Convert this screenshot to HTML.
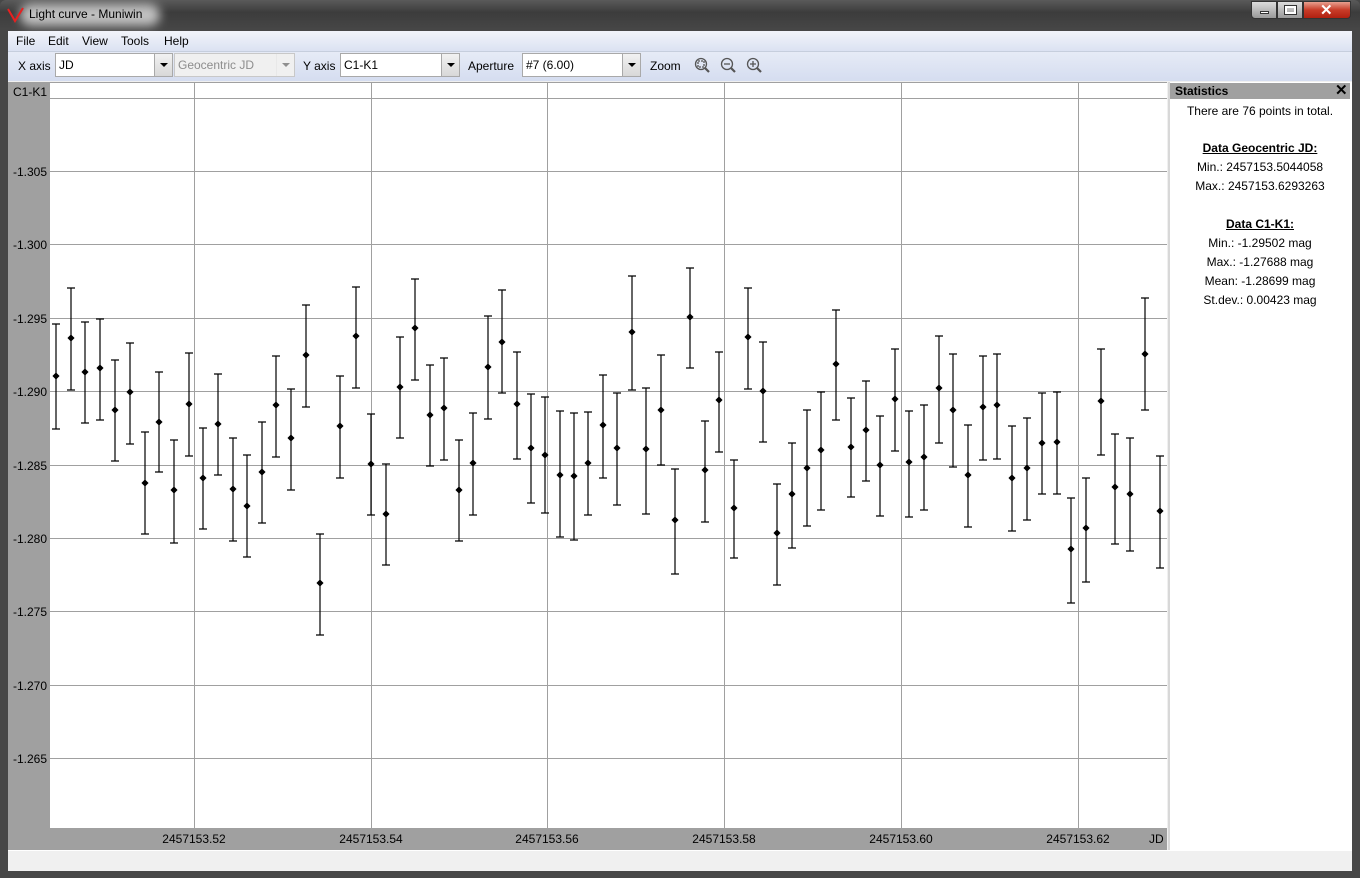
<!DOCTYPE html>
<html><head><meta charset="utf-8"><style>
*{margin:0;padding:0;box-sizing:border-box}
body{width:1360px;height:878px;overflow:hidden;background:#474747;font-family:"Liberation Sans",sans-serif;font-size:12px;color:#000;position:relative}
.a{position:absolute}
.t{position:absolute;white-space:nowrap}
.combo{position:absolute;height:24px;background:#fff;border:1px solid #a9a9a9;font-size:12px;line-height:22px;padding-left:3px}
.combo .btn{position:absolute;right:0;top:0;width:18px;height:22px;background:linear-gradient(#f2f2f2,#d8d8d8);border-left:1px solid #a9a9a9}
.combo .btn:after{content:"";position:absolute;left:5px;top:9px;border-left:4px solid transparent;border-right:4px solid transparent;border-top:4px solid #000}
.st{position:absolute;left:1170px;width:180px;text-align:center;font-size:12px}
</style></head><body>
<div class="a" style="left:0;top:0;width:1360px;height:31px;background:linear-gradient(#5a5a5a,#3c3c3c 40%,#474747);border-radius:6px 6px 0 0"></div>
<div class="a" style="left:20px;top:4px;width:140px;height:22px;border-radius:11px;background:#d8d8d8;filter:blur(5px);opacity:.85"></div>
<svg class="a" style="left:7px;top:7px" width="18" height="16"><path d="M1 2L8 14L16 1" fill="none" stroke="#e82020" stroke-width="2"/></svg>
<div class="t" style="left:29px;top:7px;font-size:12px;color:#000">Light curve - Muniwin</div>
<div class="a" style="left:1251px;top:1px;width:26px;height:18px;border:1px solid #333;border-radius:0 0 0 4px;background:linear-gradient(#ddd,#999)"><div class="a" style="left:8px;top:9px;width:9px;height:3px;background:#fff;border:1px solid #333"></div></div>
<div class="a" style="left:1277px;top:1px;width:26px;height:18px;border:1px solid #333;background:linear-gradient(#ddd,#999)"><div class="a" style="left:7px;top:4px;width:11px;height:8px;border:2px solid #fff;outline:1px solid #333"></div></div>
<div class="a" style="left:1303px;top:1px;width:48px;height:18px;border:1px solid #333;border-radius:0 0 4px 0;background:linear-gradient(#e8a090,#c83c28 50%,#b02010)"><div class="t" style="left:16px;top:-1px;color:#fff;font-weight:bold;font-size:15px">✕</div></div>
<div class="a" style="left:8px;top:31px;width:1344px;height:840px;background:#f0f0f0"></div>
<div class="a" style="left:8px;top:31px;width:1344px;height:20px;background:linear-gradient(#f2f4fa,#dbe2f2)"></div>
<div class="t" style="left:16px;top:34px">File</div><div class="t" style="left:48px;top:34px">Edit</div><div class="t" style="left:82px;top:34px">View</div><div class="t" style="left:121px;top:34px">Tools</div><div class="t" style="left:164px;top:34px">Help</div>
<div class="a" style="left:8px;top:51px;width:1344px;height:30px;background:linear-gradient(#e6ebf6,#d5ddf0);border-top:1px solid #c6cedd"></div>
<div class="t" style="left:18px;top:59px">X axis</div>
<div class="combo" style="left:55px;top:53px;width:118px">JD<div class="btn"></div></div>
<div class="combo" style="left:174px;top:53px;width:121px;background:#f0f0f0;color:#8d8d8d;border-color:#c8c8c8">Geocentric JD<div class="btn" style="background:#f0f0f0;border-color:#ddd;opacity:.4"></div></div>
<div class="t" style="left:303px;top:59px">Y axis</div>
<div class="combo" style="left:340px;top:53px;width:120px">C1-K1<div class="btn"></div></div>
<div class="t" style="left:468px;top:59px">Aperture</div>
<div class="combo" style="left:522px;top:53px;width:119px">#7 (6.00)<div class="btn"></div></div>
<div class="t" style="left:650px;top:59px">Zoom</div>
<svg class="a" style="left:694px;top:57px" width="72" height="18" fill="none" stroke="#555" stroke-width="1.3"><circle cx="7" cy="7" r="5.5"/><path d="M11 11L15 15" stroke-width="2.2"/><rect x="4" y="4" width="6" height="6" stroke-dasharray="2 1"/><circle cx="33" cy="7" r="5.5"/><path d="M37 11L41 15" stroke-width="2.2"/><path d="M30 7H36"/><circle cx="59" cy="7" r="5.5"/><path d="M63 11L67 15" stroke-width="2.2"/><path d="M56 7H62M59 4V10"/></svg>
<div class="a" style="left:8px;top:82px;width:1159px;height:768px;background:#a0a0a0"></div>
<div class="t" style="left:13px;top:85px">C1-K1</div>
<div class="t" style="left:1149px;top:832px">JD</div>
<svg class="a" style="left:0;top:0" width="1170" height="850">
<rect x="50" y="83" width="1117" height="745" fill="#fff"/>
<g stroke="#a0a0a0" stroke-width="1">
<path d="M50 98.5H1167M50 171.5H1167M50 244.5H1167M50 318.5H1167M50 391.5H1167M50 465.5H1167M50 538.5H1167M50 611.5H1167M50 685.5H1167M50 758.5H1167"/>
<path d="M194.5 83V828M371.5 83V828M547.5 83V828M724.5 83V828M901.5 83V828M1078.5 83V828"/>
</g>
<g font-size="12" fill="#000" font-family="Liberation Sans,sans-serif">
<text x="13" y="176">-1.305</text><text x="13" y="249">-1.300</text><text x="13" y="323">-1.295</text><text x="13" y="396">-1.290</text><text x="13" y="470">-1.285</text><text x="13" y="543">-1.280</text><text x="13" y="616">-1.275</text><text x="13" y="690">-1.270</text><text x="13" y="763">-1.265</text>
<text x="194" y="843" text-anchor="middle">2457153.52</text><text x="371" y="843" text-anchor="middle">2457153.54</text><text x="547" y="843" text-anchor="middle">2457153.56</text><text x="724" y="843" text-anchor="middle">2457153.58</text><text x="901" y="843" text-anchor="middle">2457153.60</text><text x="1078" y="843" text-anchor="middle">2457153.62</text>
</g>
<g stroke="#000" stroke-width="1.2" fill="none">
<path d="M56 324V429M52 324H60M52 429H60M71 288V390M67 288H75M67 390H75M85 322V423M81 322H89M81 423H89M100 319V420M96 319H104M96 420H104M115 360V461M111 360H119M111 461H119M130 343V444M126 343H134M126 444H134M145 432V534M141 432H149M141 534H149M159 372V472M155 372H163M155 472H163M174 440V543M170 440H178M170 543H178M189 353V456M185 353H193M185 456H193M203 428V529M199 428H207M199 529H207M218 374V475M214 374H222M214 475H222M233 438V541M229 438H237M229 541H237M247 455V557M243 455H251M243 557H251M262 422V523M258 422H266M258 523H266M276 356V457M272 356H280M272 457H280M291 389V490M287 389H295M287 490H295M306 305V407M302 305H310M302 407H310M320 534V635M316 534H324M316 635H324M340 376V478M336 376H344M336 478H344M356 287V388M352 287H360M352 388H360M371 414V515M367 414H375M367 515H375M386 464V565M382 464H390M382 565H390M400 337V438M396 337H404M396 438H404M415 279V380M411 279H419M411 380H419M430 365V466M426 365H434M426 466H434M444 358V460M440 358H448M440 460H448M459 440V541M455 440H463M455 541H463M473 413V515M469 413H477M469 515H477M488 316V419M484 316H492M484 419H492M502 290V393M498 290H506M498 393H506M517 352V459M513 352H521M513 459H521M531 394V503M527 394H535M527 503H535M545 397V513M541 397H549M541 513H549M560 411V537M556 411H564M556 537H564M574 413V540M570 413H578M570 540H578M588 412V515M584 412H592M584 515H592M603 375V478M599 375H607M599 478H607M617 393V505M613 393H621M613 505H621M632 276V390M628 276H636M628 390H636M646 388V514M642 388H650M642 514H650M661 355V465M657 355H665M657 465H665M675 469V574M671 469H679M671 574H679M690 268V368M686 268H694M686 368H694M705 421V522M701 421H709M701 522H709M719 352V452M715 352H723M715 452H723M734 460V558M730 460H738M730 558H738M748 288V389M744 288H752M744 389H752M763 342V442M759 342H767M759 442H767M777 484V585M773 484H781M773 585H781M792 443V548M788 443H796M788 548H796M807 410V526M803 410H811M803 526H811M821 392V510M817 392H825M817 510H825M836 310V420M832 310H840M832 420H840M851 398V497M847 398H855M847 497H855M866 381V481M862 381H870M862 481H870M880 416V516M876 416H884M876 516H884M895 349V451M891 349H899M891 451H899M909 411V517M905 411H913M905 517H913M924 405V510M920 405H928M920 510H928M939 336V443M935 336H943M935 443H943M953 354V467M949 354H957M949 467H957M968 425V527M964 425H972M964 527H972M983 356V460M979 356H987M979 460H987M997 354V459M993 354H1001M993 459H1001M1012 426V531M1008 426H1016M1008 531H1016M1027 418V520M1023 418H1031M1023 520H1031M1042 393V494M1038 393H1046M1038 494H1046M1057 392V494M1053 392H1061M1053 494H1061M1071 498V603M1067 498H1075M1067 603H1075M1086 478V582M1082 478H1090M1082 582H1090M1101 349V455M1097 349H1105M1097 455H1105M1115 434V544M1111 434H1119M1111 544H1119M1130 438V551M1126 438H1134M1126 551H1134M1145 298V410M1141 298H1149M1141 410H1149M1160 456V568M1156 456H1164M1156 568H1164"/>
</g>
<g fill="#000" stroke="#000" stroke-width="0.8">
<path d="M56 373l3 3-3 3-3-3zM71 335l3 3-3 3-3-3zM85 369l3 3-3 3-3-3zM100 365l3 3-3 3-3-3zM115 407l3 3-3 3-3-3zM130 389l3 3-3 3-3-3zM145 480l3 3-3 3-3-3zM159 419l3 3-3 3-3-3zM174 487l3 3-3 3-3-3zM189 401l3 3-3 3-3-3zM203 475l3 3-3 3-3-3zM218 421l3 3-3 3-3-3zM233 486l3 3-3 3-3-3zM247 503l3 3-3 3-3-3zM262 469l3 3-3 3-3-3zM276 402l3 3-3 3-3-3zM291 435l3 3-3 3-3-3zM306 352l3 3-3 3-3-3zM320 580l3 3-3 3-3-3zM340 423l3 3-3 3-3-3zM356 333l3 3-3 3-3-3zM371 461l3 3-3 3-3-3zM386 511l3 3-3 3-3-3zM400 384l3 3-3 3-3-3zM415 325l3 3-3 3-3-3zM430 412l3 3-3 3-3-3zM444 405l3 3-3 3-3-3zM459 487l3 3-3 3-3-3zM473 460l3 3-3 3-3-3zM488 364l3 3-3 3-3-3zM502 339l3 3-3 3-3-3zM517 401l3 3-3 3-3-3zM531 445l3 3-3 3-3-3zM545 452l3 3-3 3-3-3zM560 472l3 3-3 3-3-3zM574 473l3 3-3 3-3-3zM588 460l3 3-3 3-3-3zM603 422l3 3-3 3-3-3zM617 445l3 3-3 3-3-3zM632 329l3 3-3 3-3-3zM646 446l3 3-3 3-3-3zM661 407l3 3-3 3-3-3zM675 517l3 3-3 3-3-3zM690 314l3 3-3 3-3-3zM705 467l3 3-3 3-3-3zM719 397l3 3-3 3-3-3zM734 505l3 3-3 3-3-3zM748 334l3 3-3 3-3-3zM763 388l3 3-3 3-3-3zM777 530l3 3-3 3-3-3zM792 491l3 3-3 3-3-3zM807 465l3 3-3 3-3-3zM821 447l3 3-3 3-3-3zM836 361l3 3-3 3-3-3zM851 444l3 3-3 3-3-3zM866 427l3 3-3 3-3-3zM880 462l3 3-3 3-3-3zM895 396l3 3-3 3-3-3zM909 459l3 3-3 3-3-3zM924 454l3 3-3 3-3-3zM939 385l3 3-3 3-3-3zM953 407l3 3-3 3-3-3zM968 472l3 3-3 3-3-3zM983 404l3 3-3 3-3-3zM997 402l3 3-3 3-3-3zM1012 475l3 3-3 3-3-3zM1027 465l3 3-3 3-3-3zM1042 440l3 3-3 3-3-3zM1057 439l3 3-3 3-3-3zM1071 546l3 3-3 3-3-3zM1086 525l3 3-3 3-3-3zM1101 398l3 3-3 3-3-3zM1115 484l3 3-3 3-3-3zM1130 491l3 3-3 3-3-3zM1145 351l3 3-3 3-3-3zM1160 508l3 3-3 3-3-3z"/>
</g>
</svg>
<div class="a" style="left:1168px;top:82px;width:184px;height:769px;background:#fff;border-left:2px solid #d8d8d8"></div>
<div class="a" style="left:1170px;top:83px;width:180px;height:16px;background:#a0a0a0"></div>
<div class="t" style="left:1175px;top:84px;font-weight:bold">Statistics</div>
<div class="t" style="left:1335px;top:81px;font-weight:bold;font-size:15px">✕</div>
<div class="st" style="top:104px">There are 76 points in total.</div>
<div class="st" style="top:141px;font-weight:bold;text-decoration:underline">Data Geocentric JD:</div>
<div class="st" style="top:160px">Min.: 2457153.5044058</div>
<div class="st" style="top:179px">Max.: 2457153.6293263</div>
<div class="st" style="top:217px;font-weight:bold;text-decoration:underline">Data C1-K1:</div>
<div class="st" style="top:236px">Min.: -1.29502 mag</div>
<div class="st" style="top:255px">Max.: -1.27688 mag</div>
<div class="st" style="top:274px">Mean: -1.28699 mag</div>
<div class="st" style="top:293px">St.dev.: 0.00423 mag</div>
<div class="a" style="left:8px;top:850px;width:1344px;height:21px;background:#f0f0f0;border-top:1px solid #fff"></div>
</body></html>
